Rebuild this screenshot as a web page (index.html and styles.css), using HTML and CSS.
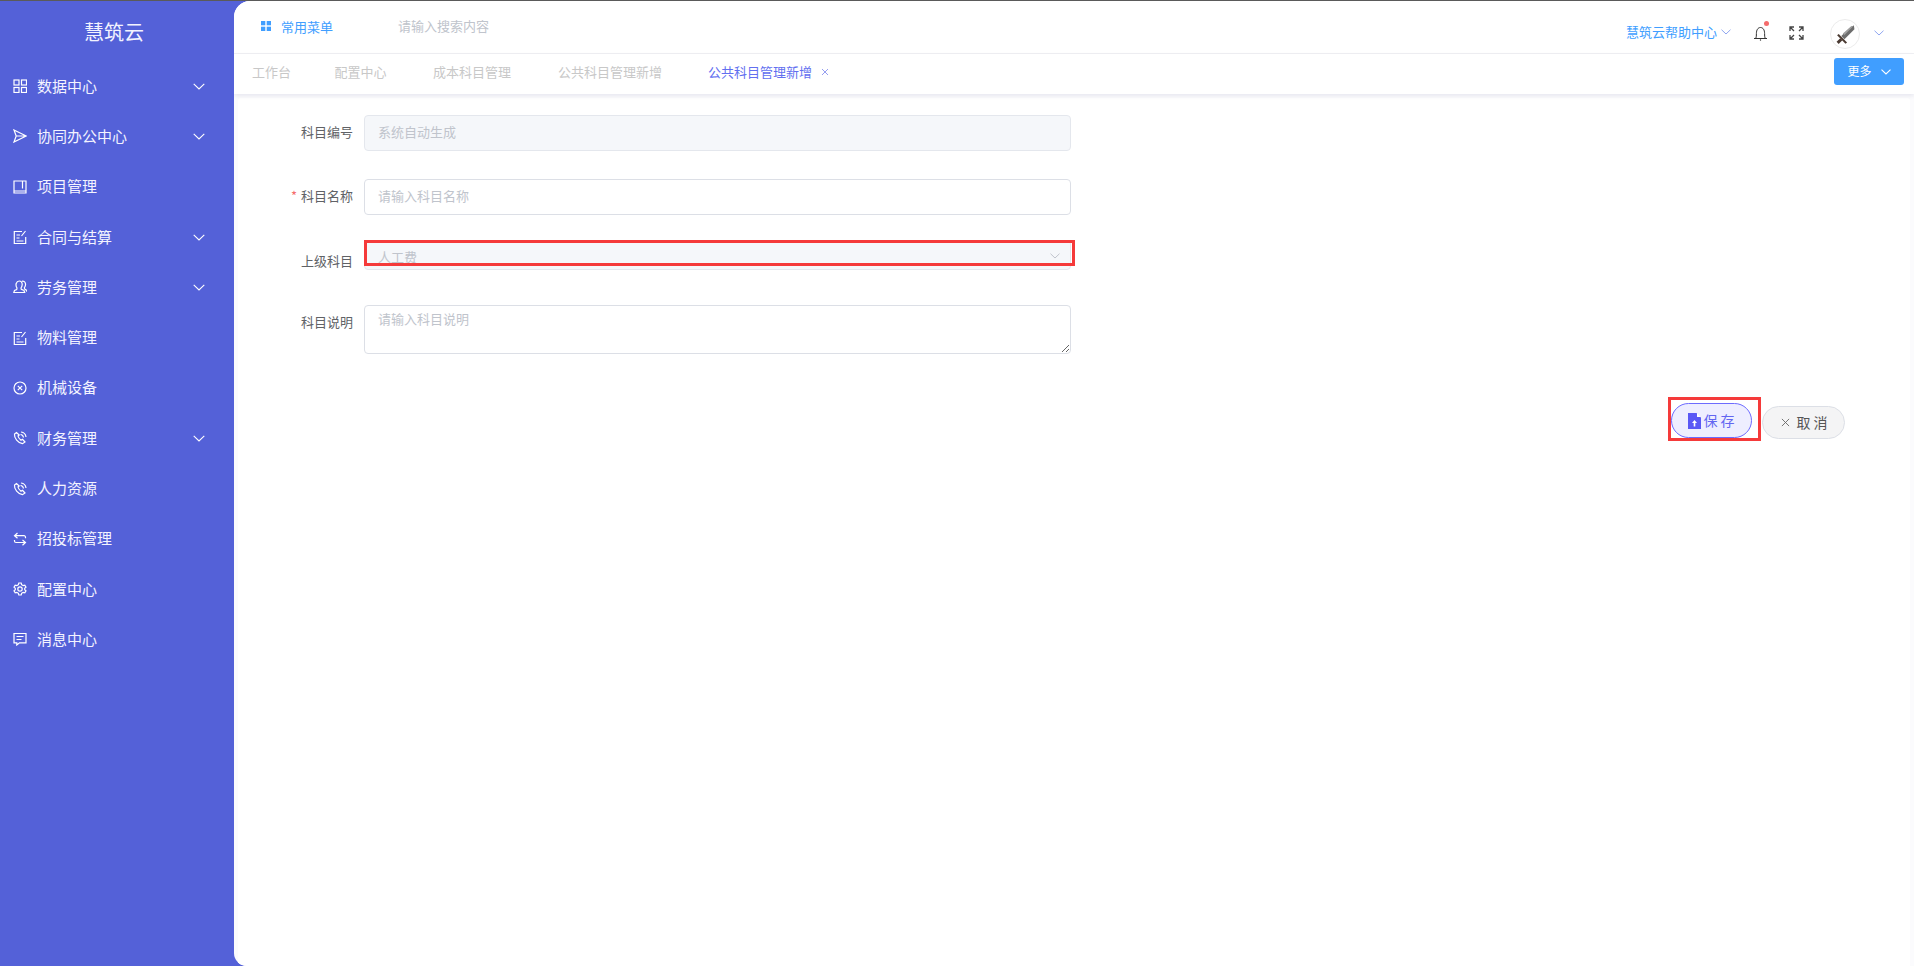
FILE: index.html
```html
<!DOCTYPE html>
<html lang="zh">
<head>
<meta charset="utf-8">
<title>慧筑云</title>
<link rel="stylesheet" href="styles.css">
</head>
<body>
<div class="app">
  <aside class="sidebar">
    <div class="logo">慧筑云</div>
    <nav class="menu">
      <div class="menu-item">
        <svg class="mi" viewBox="0 0 14 14"><rect x="1" y="1" width="5" height="5"/><rect x="8.5" y="1" width="5" height="5"/><rect x="1" y="8.5" width="5" height="5"/><rect x="8.5" y="8.5" width="5" height="5"/></svg>
        <span>数据中心</span>
        <svg class="arrow" viewBox="0 0 12 7"><path d="M.7.8 6 6l5.3-5.2"/></svg>
      </div>
      <div class="menu-item">
        <svg class="mi" viewBox="0 0 14 14"><path d="M1 1l12.2 6L1 13l2.2-6zM3.2 7h10"/></svg>
        <span>协同办公中心</span>
        <svg class="arrow" viewBox="0 0 12 7"><path d="M.7.8 6 6l5.3-5.2"/></svg>
      </div>
      <div class="menu-item">
        <svg class="mi" viewBox="0 0 14 14"><path d="M1 1h12v12H1zM1 11h12M9.5 1v7.5"/></svg>
        <span>项目管理</span>
      </div>
      <div class="menu-item">
        <svg class="mi" viewBox="0 0 14 14"><path d="M9 1.500H1.300v12h11.400V7M3.500 5h3.500M3.500 8h3M3.500 11h7M12.500 1l-4 5"/></svg>
        <span>合同与结算</span>
        <svg class="arrow" viewBox="0 0 12 7"><path d="M.7.8 6 6l5.3-5.2"/></svg>
      </div>
      <div class="menu-item">
        <svg class="mi" viewBox="0 0 14 14"><path d="M4 8c-1-1.500-1.200-3-.8-4.500C3.800 1.800 5 1 6.300 1s2.500 1 2.800 2.500c.3 1.700-.2 3.300-1.100 4.500l.3 1.300 2.700 1.200.7 2H.8l.7-2 2.200-1zM9 1.300c1.500-.4 3 .4 3.400 2 .4 1.700 0 3.200-1 4.400l.2 1.300 1.600 1 .5 1.500"/></svg>
        <span>劳务管理</span>
        <svg class="arrow" viewBox="0 0 12 7"><path d="M.7.8 6 6l5.300-5.200"/></svg>
      </div>
      <div class="menu-item">
        <svg class="mi" viewBox="0 0 14 14"><path d="M9 1.500H1.300v12h11.400V7M3.500 5h3.500M3.500 8h3M3.500 11h7M12.500 1l-4 5"/></svg>
        <span>物料管理</span>
      </div>
      <div class="menu-item">
        <svg class="mi" viewBox="0 0 14 14"><circle cx="7" cy="7" r="6"/><path d="M4.800 4.800l4.400 4.400M9.200 4.800l-4.400 4.400"/></svg>
        <span>机械设备</span>
      </div>
      <div class="menu-item">
        <svg class="mi" viewBox="0 0 14 14"><path d="M3.500 1.500 1.500 3c-.5 4 3.500 9 8 9.700l2.500-1.700-2.500-2.700-1.500.9C6.500 8 5.300 6.500 5 5l1.200-1zM7.500 3.500c1.500.2 2.700 1.400 3 3M8 1c2.700.3 4.700 2.300 5 5"/></svg>
        <span>财务管理</span>
        <svg class="arrow" viewBox="0 0 12 7"><path d="M.7.800 6 6l5.300-5.200"/></svg>
      </div>
      <div class="menu-item">
        <svg class="mi" viewBox="0 0 14 14"><path d="M3.500 1.500 1.500 3c-.5 4 3.500 9 8 9.700l2.500-1.700-2.500-2.700-1.500.9C6.500 8 5.300 6.500 5 5l1.200-1zM7.500 3.500c1.500.2 2.700 1.400 3 3M8 1c2.700.3 4.700 2.300 5 5"/></svg>
        <span>人力资源</span>
      </div>
      <div class="menu-item">
        <svg class="mi" viewBox="0 0 14 14"><path d="M4.500 1 1.500 3.700l3 2.500M1.500 3.700h9.500a1.500 1.500 0 0 1 1.500 1.500v1M9.500 8l3 2.500-3 2.800M12.500 10.500H3A1.500 1.500 0 0 1 1.500 9V8"/></svg>
        <span>招投标管理</span>
      </div>
      <div class="menu-item">
        <svg class="mi" viewBox="0 0 14 14"><circle cx="7" cy="7" r="2.200"/><path d="M5.800 1h2.400l.4 1.700 1.500.9 1.700-.5 1.200 2-1.300 1.200v1.400l1.300 1.200-1.200 2-1.700-.5-1.500.9-.4 1.700H5.800l-.4-1.700-1.500-.9-1.700.5-1.200-2 1.300-1.200V6.300L1 5.100l1.200-2 1.700.5 1.500-.9z"/></svg>
        <span>配置中心</span>
      </div>
      <div class="menu-item">
        <svg class="mi" viewBox="0 0 14 14"><path d="M1 1.500h12v9.300H6.500L3.800 13v-2.200H1zM3.500 4.500h7M3.500 7.500h5"/></svg>
        <span>消息中心</span>
      </div>
    </nav>
  </aside>
  <main class="main">
    <header class="topbar">
      <div class="quick">
        <svg class="quick-icon" viewBox="0 0 10 10"><rect width="4.300" height="4.300"/><rect x="5.700" width="4.300" height="4.300"/><rect y="5.700" width="4.300" height="4.300"/><rect x="5.700" y="5.700" width="4.300" height="4.300"/></svg>
        <span>常用菜单</span>
      </div>
      <div class="search">请输入搜索内容</div>
      <div class="top-right">
        <div class="help"><span>慧筑云帮助中心</span>
          <svg class="help-arrow" viewBox="0 0 10 6"><path d="M.5.700 5 5 9.500.7"/></svg>
        </div>
        <div class="bell">
          <svg viewBox="0 0 15 16"><path d="M1 13.500h13M2.800 13.500c.6-1.500.6-3 .6-5 0-3.500 1.500-6 4.100-6s4.100 2.500 4.100 6c0 2 0 3.500.6 5"/><circle class="bell-dot" cx="7.500" cy="15" r=".7"/></svg>
          <i class="dot"></i>
        </div>
        <svg class="full" viewBox="0 0 15 14"><path d="M1 5V1h4M1 1l4 4M10 1h4v4M14 1l-4 4M1 9v4h4M1 13l4-4M14 9v4h-4M14 13l-4-4"/></svg>
        <div class="avatar">
          <svg viewBox="0 0 20 20"><path class="blade" d="M18 1.500l.5 3.500L9 14.500 6 11.500 15 2.500z"/><path class="edge" d="M15 2.500l3-1-9 9-1.500-1.500z"/><path class="hilt" d="M3.500 9.500l8 8-1.500 1.300-8-8z"/><path class="hilt" d="M5 13.500l2 2-3.500 3.500-2-2z"/></svg>
        </div>
        <svg class="user-arrow" viewBox="0 0 10 6"><path d="M.5.700 5 5 9.500.7"/></svg>
      </div>
    </header>
    <div class="tabs">
      <span class="tab t1">工作台</span>
      <span class="tab t2">配置中心</span>
      <span class="tab t3">成本科目管理</span>
      <span class="tab t4">公共科目管理新增</span>
      <span class="tab active">公共科目管理新增<svg class="tab-close" viewBox="0 0 8 8"><path d="M1 1l6 6M7 1 1 7"/></svg></span>
      <button class="more" type="button">更多<svg viewBox="0 0 10 6"><path d="M.5.700 5 5 9.500.7"/></svg></button>
    </div>
    <section class="content">
      <form class="form">
        <div class="row">
          <label class="label">科目编号</label>
          <input class="field" disabled placeholder="系统自动生成">
        </div>
        <div class="row r2">
          <label class="label"><em>*</em>科目名称</label>
          <input class="field" placeholder="请输入科目名称">
        </div>
        <div class="row r3">
          <label class="label">上级科目</label>
          <div class="select">
            <span>人工费</span>
            <svg viewBox="0 0 10 6"><path d="M.5.700 5 5 9.500.7"/></svg>
            <i class="mark-select"></i>
          </div>
        </div>
        <div class="row r4">
          <label class="label">科目说明</label>
          <textarea class="area" placeholder="请输入科目说明"></textarea>
        </div>
        <div class="actions">
          <div class="save-wrap">
            <button class="btn save" type="button">
              <svg viewBox="0 0 13 16"><path d="M0 0h8.500L13 4.500V16H0z"/><path class="notch" d="M9 0v4h4"/><path class="up" d="M6.500 7 4 10h1.700v3.500h1.600V10H9z"/></svg>
              <span>保 存</span>
            </button>
            <i class="mark-save"></i>
          </div>
          <button class="btn cancel" type="button">
            <svg viewBox="0 0 10 10"><path d="M1 1l8 8M9 1 1 9"/></svg>
            <span>取 消</span>
          </button>
        </div>
      </form>
    </section>
  </main>
</div>
</body>
</html>
```
FILE: styles.css
```css
* { box-sizing: border-box; }
html, body { margin: 0; height: 100%; overflow: hidden; }
body {
  font-family: "Noto Sans CJK SC", "Liberation Sans", sans-serif;
  font-size: 13px;
  background: #fff;
  border-top: 1px solid #5a5a5a;
}
.app { display: flex; height: 965px; background: #5461d8; }

/* sidebar */
.sidebar { width: 234px; flex: none; color: #f3f3ff; }
.logo { height: 60px; padding-top: 15px; text-align: center; padding-right: 6px; font-size: 20px; line-height: 32px; }
.menu-item { display: flex; align-items: center; height: 50.3px; padding-left: 13px; font-size: 15px; }
.menu-item span { padding-bottom: 2px; }
.mi { width: 14px; height: 14px; margin-right: 10px; fill: none; stroke: #fff; stroke-width: 1.2; }
.arrow { width: 12px; height: 7px; margin-left: auto; margin-right: 29px; fill: none; stroke: #fff; stroke-width: 1.1; }

/* main */
.main { flex: 1; display: flex; flex-direction: column; min-width: 0; background: #fbfbfd; border-radius: 16px 0 0 13px; overflow: hidden; }
.topbar { display: flex; align-items: flex-start; height: 53px; flex: none; background: #fff; border-bottom: 1px solid #f0f0f3; padding-left: 27px; }
.quick { display: flex; align-items: center; height: 52px; padding-bottom: 2px; color: #409eff; }
.quick-icon { width: 10px; height: 10px; margin-right: 10px; fill: #409eff; }
.search { height: 52px; line-height: 50px; margin-left: 65px; color: #c0c4cc; }
.top-right { margin-left: auto; display: flex; align-items: center; height: 52px; padding-top: 12px; color: #409eff; }
.help { display: flex; align-items: center; margin-bottom: 3px; }
.help-arrow { width: 10px; height: 6px; margin-left: 4px; fill: none; stroke: #8fa6f0; stroke-width: 1; }
.bell { position: relative; width: 15px; height: 16px; margin-left: 22px; }
.bell svg { display: block; width: 15px; height: 16px; fill: none; stroke: #333; stroke-width: 1; }
.bell .bell-dot { fill: #333; stroke: none; }
.dot { position: absolute; top: -4px; right: -1px; width: 5px; height: 5px; border-radius: 50%; background: #f56c6c; }
.full { width: 15px; height: 14px; margin-left: 21px; fill: none; stroke: #444; stroke-width: 1.3; }
.avatar { width: 30px; height: 30px; margin-left: 26px; margin-top: 2px; border-radius: 50%; border: 1px solid #ececec; display: flex; align-items: center; justify-content: center; }
.avatar svg { width: 21px; height: 21px; }
.blade { fill: #6d6d6d; }
.edge { fill: #a0a0a0; }
.hilt { fill: #4a3a32; }
.user-arrow { width: 10px; height: 6px; margin-left: 14px; margin-right: 30px; fill: none; stroke: #8fa6f0; stroke-width: 1; }

/* tabs */
.tabs { position: relative; z-index: 1; display: flex; align-items: center; height: 40px; flex: none; padding-left: 18px; padding-bottom: 5px; color: #c8c8c8; background: #fff; box-shadow: 0 2px 4px rgba(60, 60, 120, .10); }
.t1 { width: 82.5px; }
.t2 { width: 98.5px; }
.t3 { width: 125px; }
.t4 { width: 150px; }
.tab.active { display: flex; align-items: center; color: #626ff0; }
.tab-close { width: 8px; height: 8px; margin-left: 9px; fill: none; stroke: #8a93ee; stroke-width: .9; }
.more { margin-left: auto; margin-right: 10px; width: 70px; height: 27px; display: flex; align-items: center; justify-content: center; gap: 9px; border: 0; border-radius: 3px; padding: 0 0 3px; background: #409eff; color: #fff; font: 12px "Noto Sans CJK SC", sans-serif; }
.more svg { width: 10px; height: 6px; margin-top: 3px; fill: none; stroke: #fff; stroke-width: 1.1; }

/* content */
.content { flex: 1; margin: 4px 4px 0; padding: 17px 0 0 126px; background: #fff; border-radius: 3px 3px 0 0; }
.row { display: flex; position: relative; width: 707px; }
.r2 { margin-top: 28px; }
.r3 { margin-top: 25px; align-items: flex-end; }
.r4 { margin-top: 35px; }
.label { position: absolute; right: 100%; margin-right: 11px; white-space: nowrap; top: 0; line-height: 33px; color: #606266; }
.label em { font-style: normal; color: #f56c6c; margin-right: 4px; }
.r3 .label { top: auto; bottom: -7px; }
.field { width: 707px; height: 36px; padding: 0 13px 3px; border: 1px solid #dcdfe6; border-radius: 4px; background: #fff; font: 13px "Noto Sans CJK SC", sans-serif; outline: none; }
.field::placeholder, .area::placeholder { color: #c0c4cc; opacity: 1; }
.field:disabled { background: #f5f7fa; border-color: #e4e7ed; }
.select { position: relative; display: flex; align-items: center; justify-content: space-between; width: 707px; height: 30px; padding: 2px 10px 0 13px; border: 1px solid #e4e7ed; border-radius: 4px; background: #f5f7fa; color: #c0c4cc; }
.select svg { width: 10px; height: 6px; fill: none; stroke: #c0c4cc; stroke-width: 1; }
.mark-select { position: absolute; left: -1px; top: -1px; width: 711px; height: 26px; border: 3px solid #f53a3a; }
.area { display: block; width: 707px; height: 49px; padding: 3px 13px; border: 1px solid #dcdfe6; border-radius: 4px; background: #fff; font: 13px/20px "Noto Sans CJK SC", sans-serif; outline: none; }
.actions { display: flex; align-items: flex-start; justify-content: flex-end; gap: 10px; width: 1481px; margin-top: 49px; }
.btn { display: flex; align-items: center; justify-content: center; border-radius: 18px; font: 14px "Noto Sans CJK SC", sans-serif; padding: 0; }
.save-wrap { position: relative; }
.save { width: 81px; height: 35px; border: 1px solid #6d6bff; background: #eeeeff; color: #6366f1; gap: 2px; padding-bottom: 2px; }
.save svg { width: 13px; height: 16px; margin-top: 2px; fill: #5a58f5; }
.save .notch { fill: #fff; }
.save .up { fill: #fff; }
.mark-save { position: absolute; left: -3px; top: -6px; width: 93px; height: 44px; border: 3px solid #f53a3a; pointer-events: none; }
.cancel { width: 83px; height: 33px; margin-top: 3px; padding: 0 0 2px 2px; border: 1px solid #dcdfe6; background: #f4f4f5; color: #555; gap: 6px; }
.cancel svg { width: 9px; height: 9px; margin-top: 2px; fill: none; stroke: #666; stroke-width: 1; }
```
